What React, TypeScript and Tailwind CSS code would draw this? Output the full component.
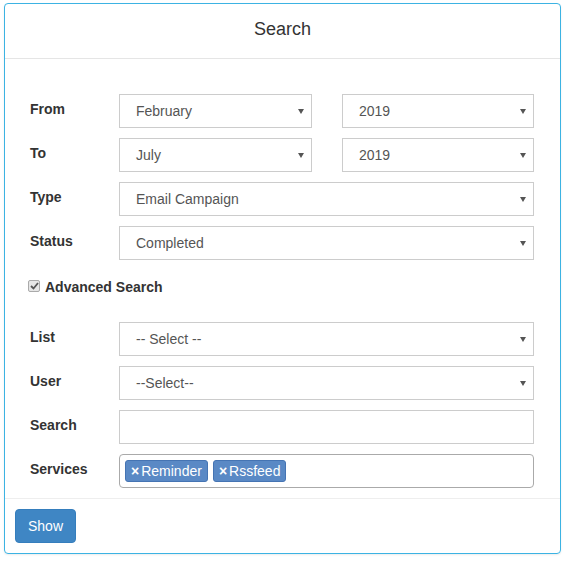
import React from 'react';

const Arrow = () => (
  <svg width="6" height="5" viewBox="0 0 6 5" className="absolute right-[7px] top-[14px]">
    <path d="M0 0 L6 0 L3 5 Z" fill="#555" />
  </svg>
);

function SelectBox({ value, className = '' }: { value: string; className?: string }) {
  return (
    <div className={`relative h-[34px] border border-[#ccc] bg-white flex items-center pl-[16px] text-[14px] text-[#555] ${className}`}>
      {value}
      <Arrow />
    </div>
  );
}

function Row({ label, children, className = '' }: { label: string; children: React.ReactNode; className?: string }) {
  return (
    <div className={`flex ${className}`}>
      <div className="w-[89px] pt-[5px] font-bold text-[14px] text-[#333] leading-[20px]">{label}</div>
      <div className="flex-1">{children}</div>
    </div>
  );
}

function Tag({ text }: { text: string }) {
  return (
    <span className="h-[22px] px-[5px] flex items-center gap-[2px] bg-[#5a89c5] border border-[#4574b3] rounded-[3px] text-white text-[14px] leading-none">
      <span className="font-bold text-[14px]">×</span>
      {text}
    </span>
  );
}

export default function App() {
  return (
    <div className="w-[564px] h-[562px] bg-white font-['Liberation_Sans',Arial,sans-serif] pt-[3px] pl-[4px]">
      <div className="w-[557px] h-[551px] border border-[#3cb3e3] rounded-[4px] flex flex-col shadow-[0_1px_2px_rgba(0,0,0,0.08)]">
        {/* Header */}
        <div className="h-[55px] pb-[4px] border-b border-[#e5e5e5] flex items-center justify-center text-[18px] text-[#333]">
          Search
        </div>

        {/* Body */}
        <div className="flex-1 pt-[35px] pl-[25px] pr-[26px]">
          <div className="flex flex-col gap-[10px]">
            <Row label="From">
              <div className="flex gap-[30px]">
                <SelectBox value="February" className="w-[193px]" />
                <SelectBox value="2019" className="flex-1" />
              </div>
            </Row>
            <Row label="To">
              <div className="flex gap-[30px]">
                <SelectBox value="July" className="w-[193px]" />
                <SelectBox value="2019" className="flex-1" />
              </div>
            </Row>
            <Row label="Type">
              <SelectBox value="Email Campaign" />
            </Row>
            <Row label="Status">
              <SelectBox value="Completed" />
            </Row>
          </div>

          <label className="flex items-center gap-[5px] mt-[17px] mb-[25px] -ml-[2px] h-[20px] font-bold text-[14px] text-[#333]">
            <span className="w-[12px] h-[12px] -mt-[3px] rounded-[2px] border border-[#aaa] bg-[#e6e6e6] flex items-center justify-center">
              <svg width="9" height="8" viewBox="0 0 9 8">
                <path d="M1 4 L3.5 6.5 L8 1" stroke="#555" strokeWidth="1.8" fill="none" />
              </svg>
            </span>
            Advanced Search
          </label>

          <div className="flex flex-col gap-[10px]">
            <Row label="List">
              <SelectBox value="-- Select --" />
            </Row>
            <Row label="User">
              <SelectBox value="--Select--" />
            </Row>
            <Row label="Search">
              <div className="h-[34px] border border-[#ccc] bg-white" />
            </Row>
            <Row label="Services">
              <div className="h-[34px] border border-[#aaa] rounded-[4px] bg-white flex items-center gap-[5px] pl-[5px]">
                <Tag text="Reminder" />
                <Tag text="Rssfeed" />
              </div>
            </Row>
          </div>
        </div>

        {/* Footer */}
        <div className="h-[55px] border-t border-[#eeeeee] pt-[10px] pl-[10px]">
          <button className="h-[34px] w-[61px] bg-[#3f86c4] border border-[#357ebd] rounded-[4px] text-white text-[14px]">
            Show
          </button>
        </div>
      </div>
    </div>
  );
}
